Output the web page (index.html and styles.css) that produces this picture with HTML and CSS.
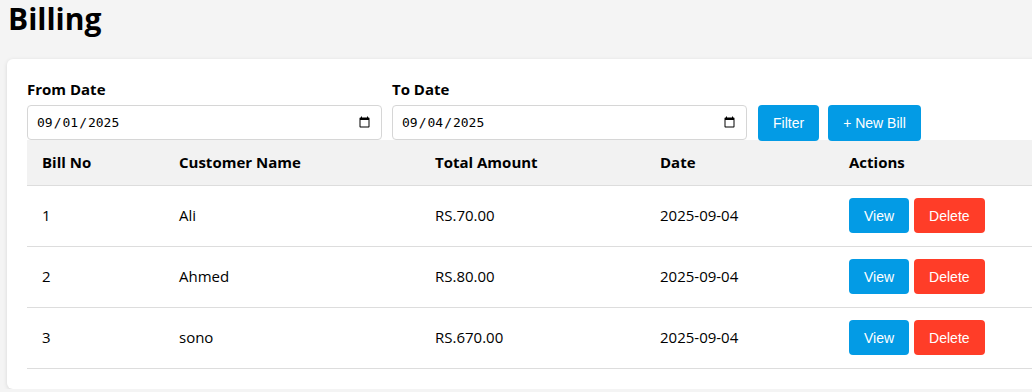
FILE: index.html
```html
<!DOCTYPE html>
<html lang="en">

<head>
    <meta charset="UTF-8">
    <meta name="viewport" content="width=device-width, initial-scale=1.0">
    <title>Billing</title>
    <link rel="stylesheet" href="styles.css">
</head>

<body>
    <h1>Billing</h1>
    <div class="card">
        <div class="filters">
            <div class="field">
                <label for="fromDate">From Date</label>
                <input type="date" id="fromDate" value="2025-09-01">
            </div>
            <div class="field">
                <label for="toDate">To Date</label>
                <input type="date" id="toDate" value="2025-09-04">
            </div>
            <button class="btn btn-blue btn-filter">Filter</button>
            <button class="btn btn-blue btn-new">+ New Bill</button>
        </div>
        <table class="bills">
            <thead>
                <tr>
                    <th class="col-no">Bill No</th>
                    <th class="col-name">Customer Name</th>
                    <th class="col-amount">Total Amount</th>
                    <th class="col-date">Date</th>
                    <th>Actions</th>
                </tr>
            </thead>
            <tbody>
                <tr>
                    <td>1</td>
                    <td>Ali</td>
                    <td>RS.70.00</td>
                    <td>2025-09-04</td>
                    <td><button class="btn btn-blue btn-view">View</button><button class="btn btn-red">Delete</button></td>
                </tr>
                <tr>
                    <td>2</td>
                    <td>Ahmed</td>
                    <td>RS.80.00</td>
                    <td>2025-09-04</td>
                    <td><button class="btn btn-blue btn-view">View</button><button class="btn btn-red">Delete</button></td>
                </tr>
                <tr>
                    <td>3</td>
                    <td>sono</td>
                    <td>RS.670.00</td>
                    <td>2025-09-04</td>
                    <td><button class="btn btn-blue btn-view">View</button><button class="btn btn-red">Delete</button></td>
                </tr>
            </tbody>
        </table>
    </div>
</body>

</html>
```

FILE: styles.css
```css
html {
    overflow: hidden;
}

body {
    font-family: "Segoe UI", "Open Sans", sans-serif;
    background-color: #f4f4f4;
    margin: 0;
    padding: 0 8px;
    color: #000;
}

h1 {
    font-size: 30px;
    font-weight: 700;
    margin: 0;
    line-height: 38px;
    height: 59px;
}

.card {
    background: #fff;
    border-radius: 6px;
    box-shadow: 0 1px 4px rgba(0, 0, 0, 0.12);
    padding: 20px;
    margin-left: -1px;
    width: 1100px;
}

.filters {
    display: flex;
    align-items: flex-end;
    gap: 10px;
}

.field {
    display: flex;
    flex-direction: column;
}

.field label {
    font-size: 15px;
    font-weight: 700;
    line-height: 21px;
    margin-bottom: 5px;
}

.field input {
    width: 355px;
    height: 35px;
    box-sizing: border-box;
    padding: 6px 8px;
    border: 1px solid #d6d6d6;
    border-radius: 4px;
    font-size: 13px;
}

.btn {
    font-family: "Liberation Sans", Arial, sans-serif;
    font-size: 14px;
    color: #fff;
    border: none;
    border-radius: 4px;
    cursor: pointer;
    height: 35px;
    padding: 0 15px;
}

.filters .btn {
    height: 36px;
    margin-bottom: -1px;
}

.btn-filter {
    margin-left: 1px;
}

.btn-new {
    margin-left: -1px;
}

.btn-blue {
    background-color: #039be5;
}

.btn-red {
    background-color: #ff3d28;
}

.btn-view {
    margin-right: 5px;
}

.bills {
    border-collapse: collapse;
    width: 1060px;
    font-size: 15px;
}

.bills th,
.bills td {
    text-align: left;
    padding: 12px 15px;
    border-bottom: 1px solid #ddd;
    line-height: 21px;
}

.bills th {
    background-color: #f2f2f2;
    font-weight: 700;
}

.bills td {
    padding: 12px 15px 13px;
}

.col-no {
    width: 107px;
}

.col-name {
    width: 226px;
}

.col-amount {
    width: 195px;
}

.col-date {
    width: 159px;
}
```
